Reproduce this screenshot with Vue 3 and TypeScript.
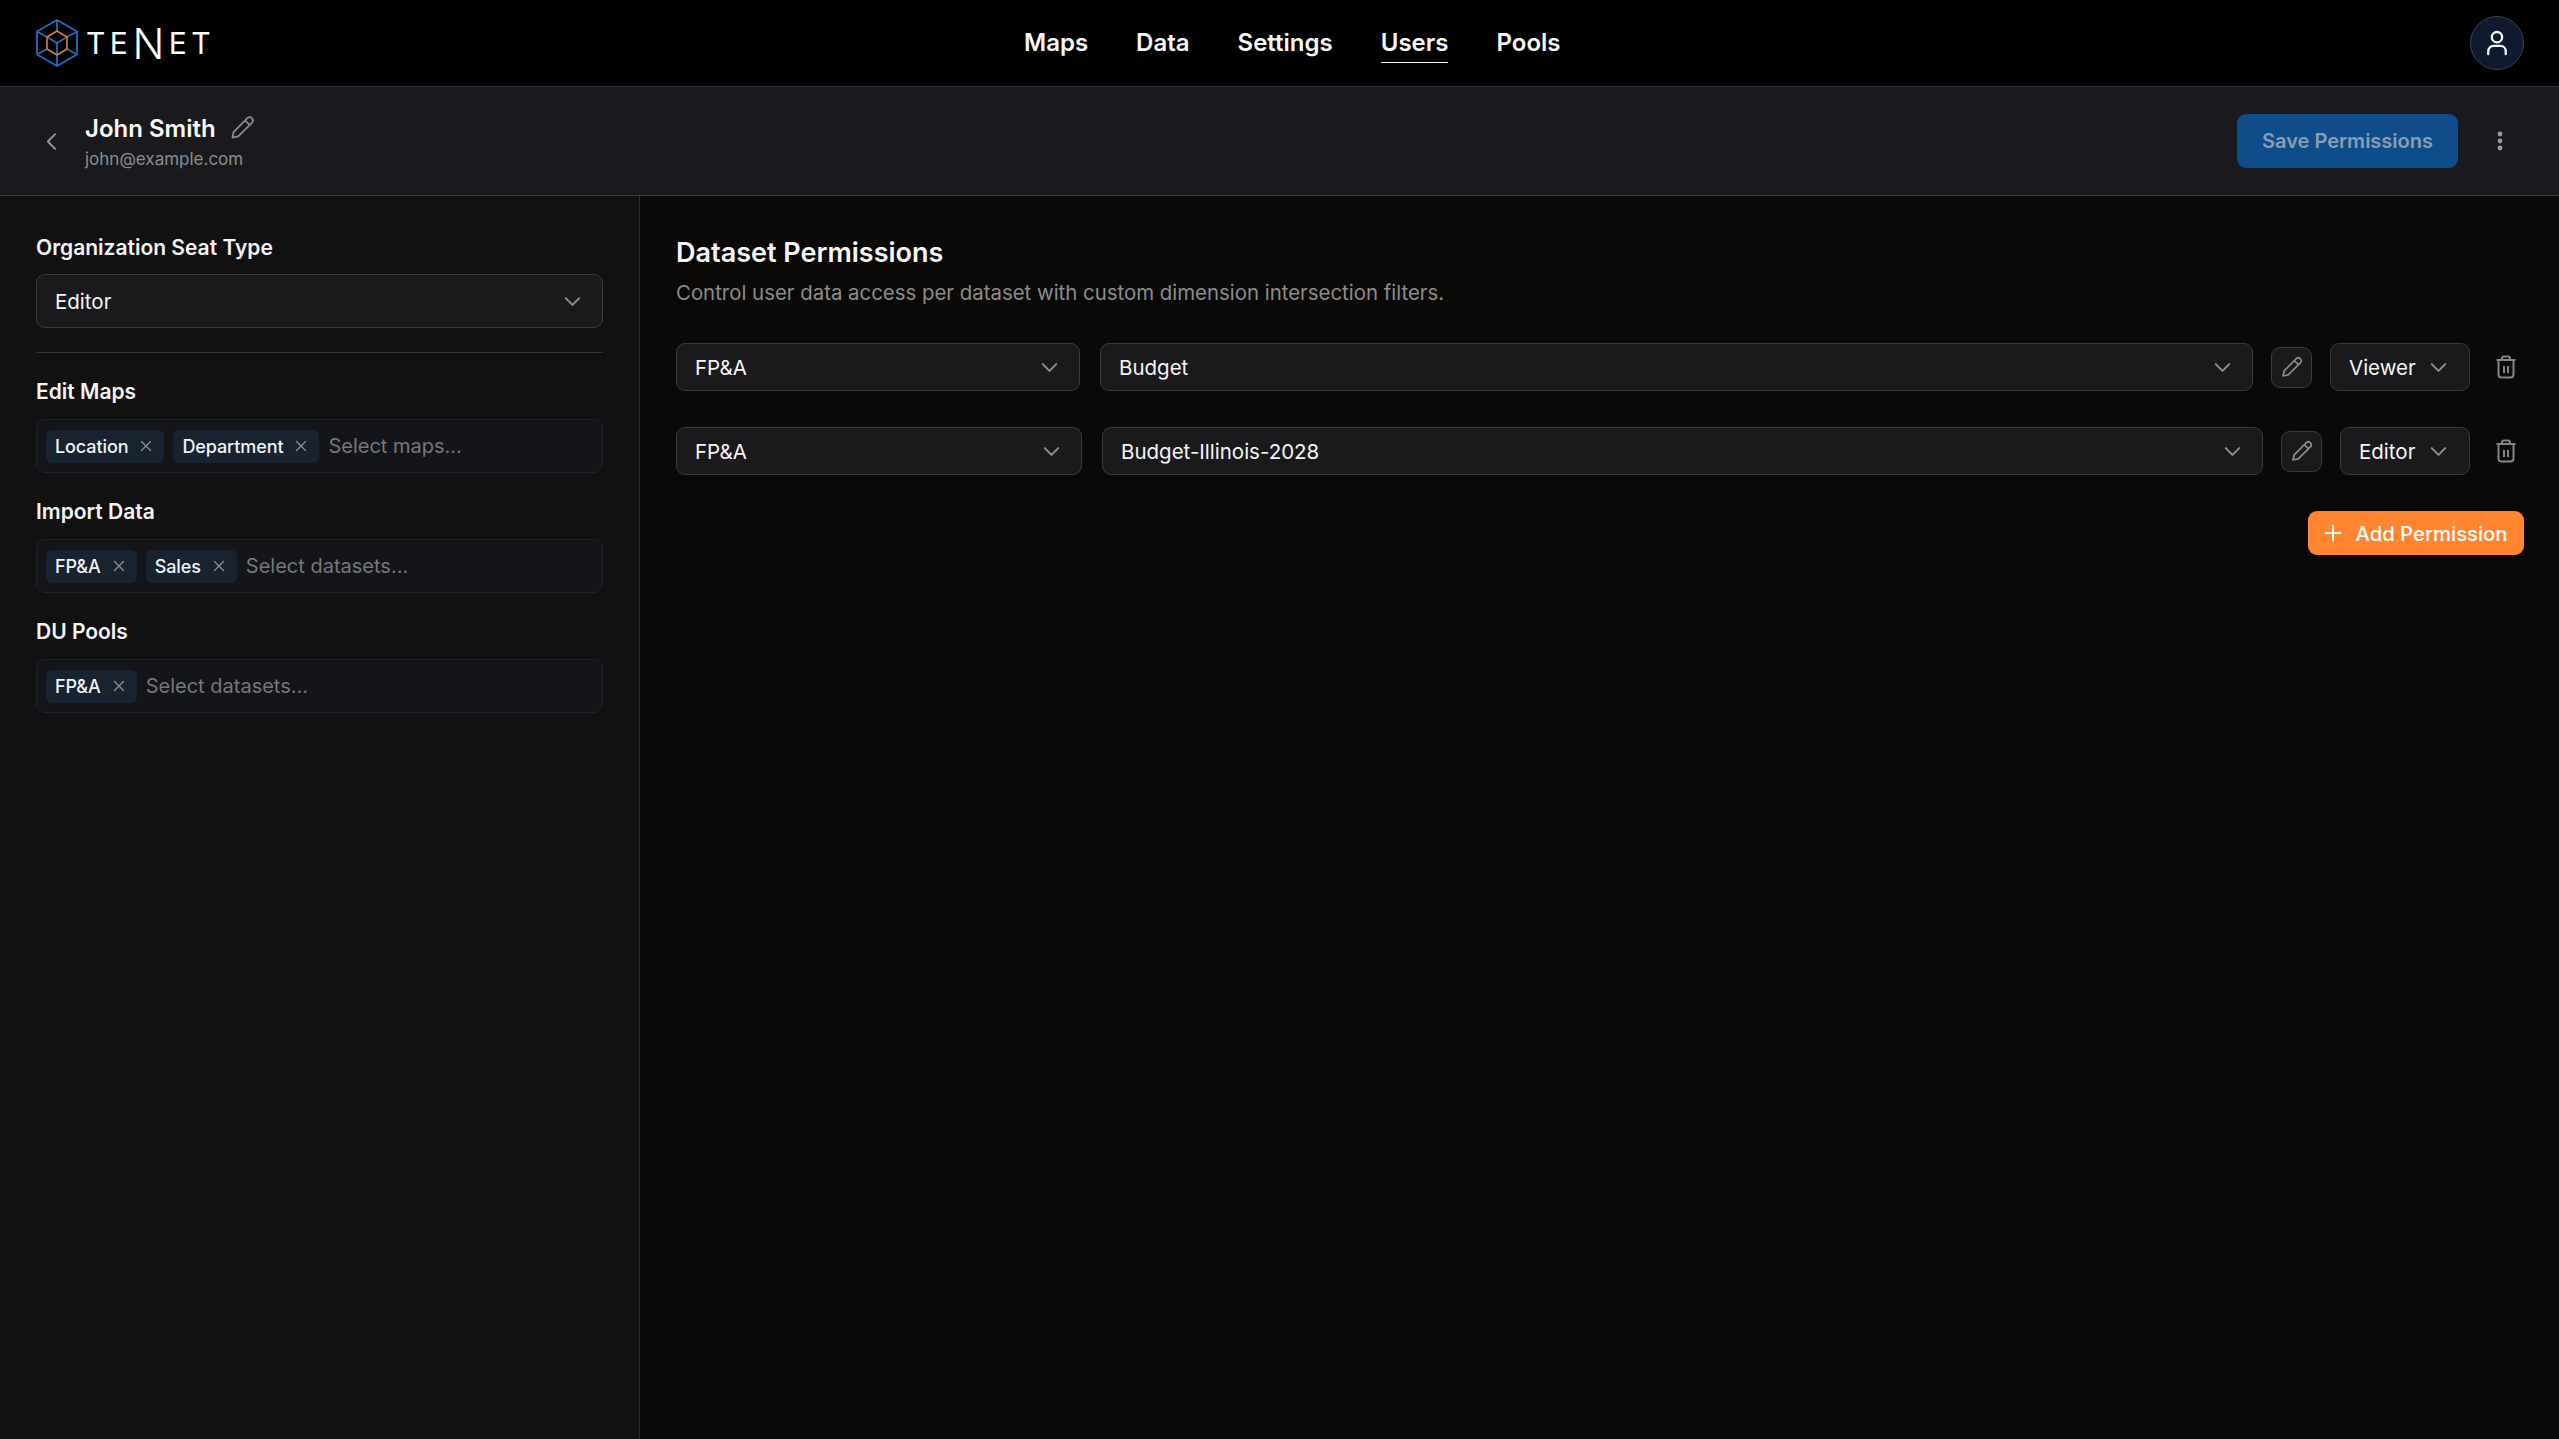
<script setup lang="ts">
interface TagField {
  label: string
  tags: string[]
  placeholder: string
}

interface PermissionRow {
  group: string
  dataset: string
  role: string
  groupGrow: number
  datasetGrow: number
  roleWidth: number
}

const navItems = ['Maps', 'Data', 'Settings', 'Users', 'Pools']

const tagFields: TagField[] = [
  { label: 'Edit Maps', tags: ['Location', 'Department'], placeholder: 'Select maps...' },
  { label: 'Import Data', tags: ['FP&A', 'Sales'], placeholder: 'Select datasets...' },
  { label: 'DU Pools', tags: ['FP&A'], placeholder: 'Select datasets...' }
]

// grow values are the select widths minus their own padding and border
const rows: PermissionRow[] = [
  { group: 'FP&A', dataset: 'Budget', role: 'Viewer', groupGrow: 368, datasetGrow: 1117, roleWidth: 140 },
  { group: 'FP&A', dataset: 'Budget-Illinois-2028', role: 'Editor', groupGrow: 370, datasetGrow: 1125, roleWidth: 130 }
]
</script>

<template>
  <div class="page">
    <header class="topbar">
      <div class="logo">
        <svg class="logo-mark" viewBox="0 0 42 48" fill="none" stroke-linejoin="round">
          <g stroke="#1d6fc4" stroke-width="1.8">
            <path d="M21 1 41 12.5v23L21 47 1 35.5v-23z" />
            <path d="M21 1v11M41 12.5l-10 5.5M1 12.5l10 5.5M41 35.5l-10-5.5M1 35.5l10-5.5M21 47V36" />
            <path d="M11 18l10 6 10-6M21 24v12" />
          </g>
          <path d="M21 12 31 18v12l-10 6-10-6V18z" stroke="#d9813a" stroke-width="1.6" />
        </svg>
        <span class="logo-text">TE<span class="logo-n">N</span>ET</span>
      </div>
      <nav class="nav">
        <a v-for="item in navItems" :key="item" :class="['nav-link', { active: item === 'Users' }]">{{ item }}</a>
      </nav>
      <button class="avatar">
        <svg viewBox="0 0 24 24" fill="none" stroke="#f2f4f7" stroke-width="2" stroke-linecap="round" width="28" height="28">
          <circle cx="12" cy="7" r="4.4" />
          <path d="M4.5 21.5V19A4.5 4.5 0 0 1 9 14.5h6a4.5 4.5 0 0 1 4.5 4.5v2.5" />
        </svg>
      </button>
    </header>

    <div class="subbar">
      <svg class="back" viewBox="0 0 12 20" fill="none" stroke="#9a9a9a" stroke-width="2" stroke-linecap="round" stroke-linejoin="round">
        <path d="M10 2 2 10l8 8" />
      </svg>
      <div class="user-info">
        <div class="user-name-row">
          <span class="user-name">John Smith</span>
          <svg class="name-pencil" viewBox="0 0 24 24" fill="none" stroke="#8a8a8a" stroke-width="1.6" stroke-linecap="round" stroke-linejoin="round">
            <path d="M3 21l1.2-5.2L16.3 3.7a2.9 2.9 0 0 1 4.1 4.1L8.2 19.8zM14.3 5.7l4 4" />
          </svg>
        </div>
        <div class="user-email">john@example.com</div>
      </div>
      <button class="save-btn">Save Permissions</button>
      <svg class="more" viewBox="0 0 8 24" fill="#9a9a9a">
        <circle cx="4" cy="5" r="2.4" />
        <circle cx="4" cy="12" r="2.4" />
        <circle cx="4" cy="19" r="2.4" />
      </svg>
    </div>

    <div class="content">
      <aside class="sidebar">
        <div class="field-label">Organization Seat Type</div>
        <div class="select seat-select">
          <span class="select-text">Editor</span>
          <svg class="chevron" viewBox="0 0 24 24" fill="none" stroke="#8f8f8f" stroke-width="1.8" stroke-linecap="round" stroke-linejoin="round">
            <path d="m6 9 6 6 6-6" />
          </svg>
        </div>
        <div class="divider"></div>

        <div v-for="field in tagFields" :key="field.label" class="tag-field">
          <div class="field-label">{{ field.label }}</div>
          <div class="tag-box">
            <span v-for="tag in field.tags" :key="tag" class="tag">
              {{ tag }}
              <svg class="tag-x" viewBox="0 0 12 12" fill="none" stroke="#8b9097" stroke-width="1.3" stroke-linecap="round">
                <path d="M1.5 1.5l9 9M10.5 1.5l-9 9" />
              </svg>
            </span>
            <span class="placeholder">{{ field.placeholder }}</span>
          </div>
        </div>
      </aside>

      <main class="main">
        <h1 class="title">Dataset Permissions</h1>
        <p class="subtitle">Control user data access per dataset with custom dimension intersection filters.</p>

        <div v-for="row in rows" :key="row.dataset" class="perm-row">
          <div class="select row-select group-select" :style="{ flexGrow: row.groupGrow }">
            <span class="select-text">{{ row.group }}</span>
            <svg class="chevron" viewBox="0 0 24 24" fill="none" stroke="#8f8f8f" stroke-width="1.8" stroke-linecap="round" stroke-linejoin="round">
              <path d="m6 9 6 6 6-6" />
            </svg>
          </div>
          <div class="select row-select" :style="{ flexGrow: row.datasetGrow }">
            <span class="select-text">{{ row.dataset }}</span>
            <svg class="chevron" viewBox="0 0 24 24" fill="none" stroke="#8f8f8f" stroke-width="1.8" stroke-linecap="round" stroke-linejoin="round">
              <path d="m6 9 6 6 6-6" />
            </svg>
          </div>
          <button class="edit-btn">
            <svg viewBox="0 0 24 24" width="24" height="24" fill="none" stroke="#8a8a8a" stroke-width="1.7" stroke-linecap="round" stroke-linejoin="round">
              <path d="M3 21l1.2-5.2L16.3 3.7a2.9 2.9 0 0 1 4.1 4.1L8.2 19.8zM14.3 5.7l4 4" />
            </svg>
          </button>
          <div class="select row-select role-select" :style="{ width: `${row.roleWidth}px` }">
            <span class="select-text">{{ row.role }}</span>
            <svg class="chevron" viewBox="0 0 24 24" fill="none" stroke="#8f8f8f" stroke-width="1.8" stroke-linecap="round" stroke-linejoin="round">
              <path d="m6 9 6 6 6-6" />
            </svg>
          </div>
          <button class="trash-btn">
            <svg viewBox="0 0 24 24" width="24" height="24" fill="none" stroke="#858585" stroke-width="2" stroke-linejoin="round">
              <path d="M2.5 5h19M8 5V3.5a2 2 0 0 1 2-2h4a2 2 0 0 1 2 2V5M4.5 5v14.5a3 3 0 0 0 3 3h9a3 3 0 0 0 3-3V5M10 11v7M14 11v7" />
            </svg>
          </button>
        </div>

        <div class="actions">
          <button class="add-btn">
            <svg viewBox="0 0 18 18" width="18" height="18" fill="none" stroke="#fff" stroke-width="1.8" stroke-linecap="round">
              <path d="M9 1.5v15M1.5 9h15" />
            </svg>
            Add Permission
          </button>
        </div>
      </main>
    </div>
  </div>
</template>

<style scoped>
.page {
  width: 2559px;
  height: 1439px;
  display: flex;
  flex-direction: column;
  overflow: hidden;
  font-family: Inter, 'Liberation Sans', sans-serif;
  color: #f4f4f5;
  background: #0a0908;
}

.topbar {
  flex: 0 0 87px;
  box-sizing: border-box;
  display: flex;
  align-items: center;
  padding: 0 35px 0 36px;
  background: #000;
  border-bottom: 1px solid #2a2a38;
}

.logo {
  display: flex;
  align-items: center;
  gap: 8px;
  width: 173px;
}

.logo-mark {
  width: 42px;
  height: 48px;
  flex-shrink: 0;
}

.logo-text {
  font-size: 30px;
  font-weight: 400;
  letter-spacing: 4.5px;
  line-height: 1;
  color: #fff;
  white-space: nowrap;
}

.logo-n {
  font-size: 42px;
  line-height: 30px;
  font-weight: 300;
  vertical-align: -5px;
}

.nav {
  display: flex;
  gap: 48px;
  margin-left: 815px;
}

.nav-link {
  position: relative;
  font-size: 24px;
  font-weight: 600;
  line-height: 30px;
  color: #f7f7f7;
}

.nav-link.active::after {
  content: '';
  position: absolute;
  left: 0;
  right: 0;
  bottom: -5px;
  height: 1.5px;
  background: #f7f7f7;
}

.avatar {
  margin-left: auto;
  width: 54px;
  height: 54px;
  padding: 0;
  display: flex;
  align-items: center;
  justify-content: center;
  border-radius: 50%;
  border: 1px solid #3b4252;
  background: #0f1a2e;
}

.subbar {
  flex: 0 0 109px;
  box-sizing: border-box;
  display: flex;
  align-items: center;
  padding: 0 36px 0 46px;
  background: #1a1a1e;
  border-bottom: 1px solid #3a3a3c;
}

.back {
  width: 11px;
  height: 19px;
  flex-shrink: 0;
}

.user-info {
  margin: 2px 0 0 28px;
}

.user-name-row {
  display: flex;
  align-items: center;
  gap: 13px;
}

.user-name {
  font-size: 24px;
  font-weight: 600;
  line-height: 30px;
  color: #f7f7f7;
}

.name-pencil {
  width: 27px;
  height: 27px;
  margin-top: -2px;
}

.user-email {
  margin-top: 3px;
  font-size: 17px;
  line-height: 24px;
  color: #8c8c8c;
}

.save-btn {
  margin-left: auto;
  width: 221px;
  height: 54px;
  padding: 0;
  border: none;
  border-radius: 9px;
  background: #0f4c8a;
  color: #8a9db3;
  font-family: inherit;
  font-size: 20px;
  font-weight: 600;
}

.more {
  width: 8px;
  height: 24px;
  margin-left: 38px;
  margin-right: 19px;
}

.content {
  flex: 1;
  display: flex;
  min-height: 0;
}

.sidebar {
  width: 640px;
  box-sizing: border-box;
  padding: 37px 36px 0;
  background: #111112;
  border-right: 1px solid #2c2c2e;
}

.field-label {
  font-size: 21px;
  font-weight: 600;
  line-height: 30px;
  color: #f4f4f5;
}

.select {
  box-sizing: border-box;
  display: flex;
  align-items: center;
  justify-content: space-between;
  border: 1px solid #3a3a3d;
  border-radius: 9px;
  background: #1a1a1d;
}

.select-text {
  font-size: 20.5px;
  color: #f4f4f5;
  white-space: nowrap;
}

.seat-select {
  height: 54px;
  margin-top: 11px;
  padding: 0 16px 0 18px;
}

.chevron {
  width: 27px;
  height: 27px;
  flex-shrink: 0;
}

.divider {
  height: 1px;
  margin: 24px 0;
  background: #333336;
}

.tag-field {
  margin-bottom: 24px;
}

.tag-box {
  box-sizing: border-box;
  height: 54px;
  margin-top: 12px;
  padding: 0 9px;
  display: flex;
  align-items: center;
  gap: 9px;
  border: 1px solid #1f2229;
  border-radius: 9px;
  background: #13151a;
}

.tag {
  box-sizing: border-box;
  height: 33px;
  padding: 0 12px 0 9px;
  display: flex;
  align-items: center;
  gap: 12px;
  border-radius: 6px;
  background: #19232f;
  font-size: 18px;
  font-weight: 500;
  letter-spacing: -0.1px;
  color: #f0f2f5;
}

.tag-x {
  width: 12px;
  height: 12px;
  flex-shrink: 0;
}

.placeholder {
  font-size: 20px;
  color: #76777a;
  white-space: nowrap;
}

.main {
  flex: 1;
  min-width: 0;
  padding: 0 35px 0 36px;
}

.title {
  margin: 39px 0 0;
  font-size: 27px;
  font-weight: 600;
  line-height: 36px;
  color: #f7f7f7;
}

.subtitle {
  margin: 7px 0 0;
  font-size: 20.4px;
  line-height: 30px;
  color: #8c8c8c;
}

.perm-row {
  display: flex;
  align-items: center;
  gap: 18px;
  margin-top: 36px;
}

.subtitle + .perm-row {
  margin-top: 35px;
}

.row-select {
  height: 48px;
  flex: 1 1 0;
  min-width: 0;
  padding: 0 16px 0 18px;
}

.group-select {
  margin-right: 2px;
}

.role-select {
  flex: 0 0 auto;
  padding-right: 17px;
}

.edit-btn {
  width: 41px;
  height: 41px;
  flex-shrink: 0;
  padding: 0;
  display: flex;
  align-items: center;
  justify-content: center;
  border: 1px solid #3a3a3d;
  border-radius: 9px;
  background: #1a1a1d;
}

.trash-btn {
  width: 36px;
  height: 36px;
  flex-shrink: 0;
  padding: 0;
  display: flex;
  align-items: center;
  justify-content: center;
  border: none;
  background: transparent;
}

.actions {
  display: flex;
  justify-content: flex-end;
  margin-top: 36px;
}

.add-btn {
  width: 216px;
  height: 44px;
  padding: 0;
  display: flex;
  align-items: center;
  justify-content: center;
  gap: 13px;
  border: none;
  border-radius: 9px;
  background: #ff8530;
  color: #fff;
  font-family: inherit;
  font-size: 20.3px;
  font-weight: 500;
}
</style>
